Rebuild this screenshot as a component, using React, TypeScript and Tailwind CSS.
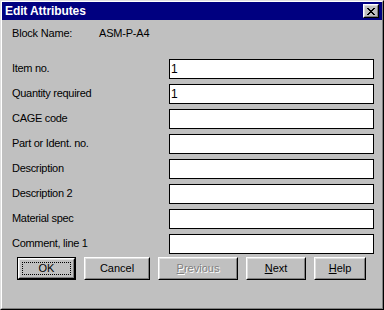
import React from 'react';

const font = { fontFamily: '"Liberation Sans", Arial, sans-serif' };

const fields = [
  { label: 'Item no.', value: '1' },
  { label: 'Quantity required', value: '1' },
  { label: 'CAGE code', value: '' },
  { label: 'Part or Ident. no.', value: '' },
  { label: 'Description', value: '' },
  { label: 'Description 2', value: '' },
  { label: 'Material spec', value: '' },
  { label: 'Comment, line 1', value: '' },
];

interface BtnProps {
  width: string;
  children: React.ReactNode;
  isDefault?: boolean;
  disabled?: boolean;
}

const Win95Button: React.FC<BtnProps> = ({ width, children, isDefault, disabled }) => {
  const bevel = (
    <div className="h-full w-full border border-t-white border-l-white border-r-black border-b-black">
      <div className="h-full w-full border border-t-[#dfdfdf] border-l-[#dfdfdf] border-r-[#808080] border-b-[#808080] flex items-center justify-center p-[2px]">
        <div
          className={`h-full w-full flex items-center justify-center text-[11px] leading-none ${
            isDefault ? 'border border-dotted border-black' : ''
          } ${disabled ? 'text-[#808080] [text-shadow:1px_1px_0_#fff]' : 'text-black'}`}
        >
          {children}
        </div>
      </div>
    </div>
  );
  return (
    <div className={`${width} h-[23px] ${isDefault ? 'border border-black' : ''}`}>{bevel}</div>
  );
};

export default function App() {
  return (
    <div className="w-[384px] h-[310px] bg-[#c0c0c0]" style={font}>
      <div className="h-full w-full border border-t-[#dfdfdf] border-l-[#dfdfdf] border-r-black border-b-black">
        <div className="h-full w-full border border-t-white border-l-white border-r-[#808080] border-b-[#808080] flex flex-col">
          {/* title bar */}
          <div className="h-[18px] bg-[#000080] flex items-center justify-between pl-[3px] pr-[3px]">
            <span className="text-white font-bold text-[12px] leading-none tracking-[-0.1px]">Edit Attributes</span>
            <div className="w-[16px] h-[14px] border border-t-white border-l-white border-r-black border-b-black bg-[#c0c0c0]">
              <div className="h-full w-full border border-t-[#dfdfdf] border-l-[#dfdfdf] border-r-[#808080] border-b-[#808080] flex items-center justify-center">
                <svg width="8" height="7" viewBox="0 0 8 7" shapeRendering="crispEdges">
                  <path d="M0 0h2v1H0zM6 0h2v1H6zM1 1h2v1H1zM5 1h2v1H5zM2 2h4v1H2zM3 3h2v1H3zM2 4h4v1H2zM1 5h2v1H1zM5 5h2v1H5zM0 6h2v1H0zM6 6h2v1H6z" fill="#000" />
                </svg>
              </div>
            </div>
          </div>

          {/* block name */}
          <div className="mt-[7px] flex text-[11px] leading-[13px] text-black pl-[10px] tracking-[-0.2px]">
            <span className="w-[87px]">Block Name:</span>
            <span>ASM-P-A4</span>
          </div>

          {/* fields */}
          <div className="mt-[19px] flex flex-col gap-[5px] pl-[10px]">
            {fields.map((f) => (
              <div key={f.label} className="flex items-center h-[20px]">
                <span className="w-[157px] text-[11px] text-black leading-none tracking-[-0.3px] pb-[2px]">{f.label}</span>
                <div className="w-[205px] h-[20px] border border-black bg-white flex items-center pl-[1px] text-[12px] text-black">
                  {f.value}
                </div>
              </div>
            ))}
          </div>

          {/* buttons */}
          <div className="mt-[3px] flex gap-[8px] pl-[15px]">
            <Win95Button width="w-[59px]" isDefault>
              OK
            </Win95Button>
            <Win95Button width="w-[66px]">Cancel</Win95Button>
            <Win95Button width="w-[80px]" disabled>
              <span>
                <u>P</u>revious
              </span>
            </Win95Button>
            <Win95Button width="w-[60px]">
              <span>
                <u>N</u>ext
              </span>
            </Win95Button>
            <Win95Button width="w-[52px]">
              <span>
                <u>H</u>elp
              </span>
            </Win95Button>
          </div>
        </div>
      </div>
    </div>
  );
}
